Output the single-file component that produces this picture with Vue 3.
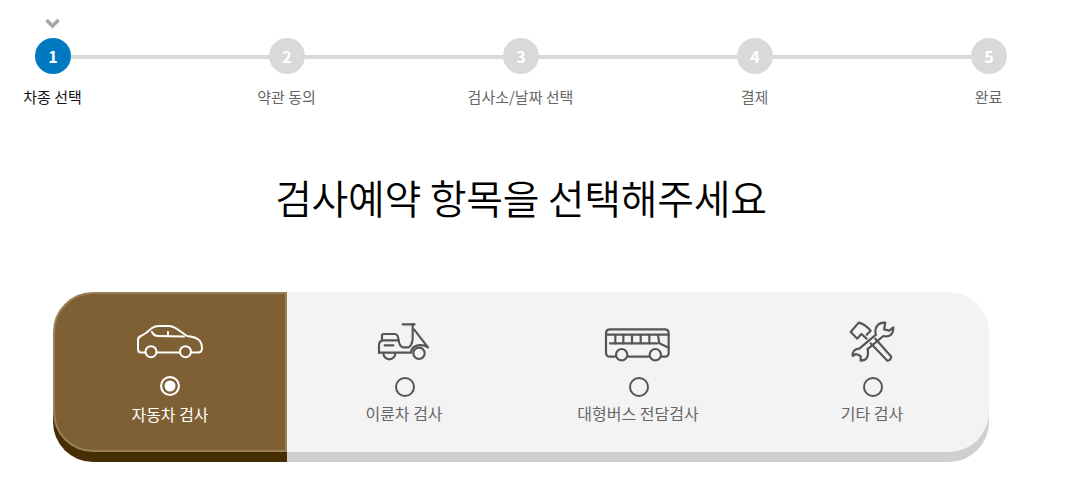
<script setup>
const steps = [
  { n: 1, label: '차종 선택', active: true },
  { n: 2, label: '약관 동의' },
  { n: 3, label: '검사소/날짜 선택' },
  { n: 4, label: '결제' },
  { n: 5, label: '완료' },
]
</script>

<template>
  <div class="page">
    <div class="stepper">
      <template v-for="(s, i) in steps" :key="s.n">
        <div class="line" v-if="i > 0"></div>
        <div class="step" :class="{ active: s.active }">
          <svg v-if="s.active" class="chev" viewBox="0 0 16 12" width="16" height="12">
            <path d="M2.500 3 L8.500 9 L14.500 3" fill="none" stroke="#a6a6a6" stroke-width="3.600" />
          </svg>
          <div class="dot">{{ s.n }}</div>
          <div class="step-label">{{ s.label }}</div>
        </div>
      </template>
    </div>

    <h1 class="title">검사예약 항목을 선택해주세요</h1>

    <div class="card">
      <div class="tab selected">
        <svg class="icon" viewBox="0 -2 66 46" width="66" height="46">
          <g fill="none" stroke="#fff" stroke-width="2" stroke-linecap="round" stroke-linejoin="round">
            <path d="M8.500 28.500 H4 Q1 28.500 1 25 V16 Q1 13 4 12 L9 9 L15 4 Q18 2 22 2 H32 Q36 2 40 5 L50 12 Q60 13 63 17 Q65 20 65 24 Q65 28.500 61 28.500 H54" />
            <path d="M20 28.500 H43" />
            <circle cx="14" cy="27.700" r="5.500" />
            <circle cx="48.500" cy="27.700" r="5.500" />
            <path d="M15 8 Q17 12 21 12 L47 12.500" />
            <path d="M31 8 V12" />
          </g>
        </svg>
        <span class="radio on"></span>
        <span class="label">자동차 검사</span>
      </div>
      <div class="rest">
        <div class="tab">
          <svg class="icon" viewBox="72 36 180 138" width="60" height="46">
            <g fill="none" stroke="#555" stroke-width="6.500" stroke-linecap="round" stroke-linejoin="round">
              <path d="M87 128 V104 Q88 92 100 91 H146 Q148 108 158 112 H176 Q190 104 188 72 L188 42" />
              <path d="M87 128 H183 Q184 110 204 106 Q222 104 234 112 L192 58" />
              <path d="M96 91 V76 Q96 72 102 72 H134 Q144 72 146 91" />
              <path d="M104 106 H130" />
              <path d="M158 43 H194" />
              <path d="M100 130 A18 18 0 0 0 136 130" />
              <circle cx="207" cy="130" r="17" />
            </g>
          </svg>
          <span class="radio"></span>
          <span class="label">이륜차 검사</span>
        </div>
        <div class="tab">
          <svg class="icon" viewBox="99 36 210 138" width="70" height="46">
            <g fill="none" stroke="#555" stroke-width="6.500" stroke-linecap="round" stroke-linejoin="round">
              <path d="M136 140 H120 Q108 140 108 128 V70 Q108 58 120 58 H284 Q296 58 296 70 V128 Q296 140 284 140 H274 M174 140 H236" />
              <path d="M108 74 H296" />
              <path d="M120 100 H262" />
              <path d="M136 76 V100 M160 76 V100 M186 76 V100 M212 76 V100 M238 76 V100" />
              <path d="M264 76 L268 100 L296 113" />
              <circle cx="155" cy="134" r="17" />
              <circle cx="256" cy="134" r="17" />
            </g>
          </svg>
          <span class="radio"></span>
          <span class="label">대형버스 전담검사</span>
        </div>
        <div class="tab">
          <svg class="icon" viewBox="66 96 180 138" width="60" height="46">
            <g fill="none" stroke="#555" stroke-width="6.500" stroke-linecap="round" stroke-linejoin="round">
              <path d="M116 98 L92 126 L112 146 L124 132 L140 146 M116 98 Q134 102 152 122 L140 134" />
              <path d="M152 160 L202 212 Q212 212 214 200 L166 146" />
              <path d="M196 98 Q170 96 166 122 Q166 130 168 134 L118 176 Q96 178 98 198 L108 192 L122 198 L122 212 Q146 212 144 186 Q144 180 142 178 L190 138 Q220 144 220 112 L208 122 L192 118 Z" />
            </g>
          </svg>
          <span class="radio"></span>
          <span class="label">기타 검사</span>
        </div>
      </div>
    </div>
  </div>
</template>

<style>
html, body { margin: 0; background: #fff; }
</style>

<style scoped>
.page {
  width: 1078px;
  height: 483px;
  overflow: hidden;
  font-family: "Noto Sans CJK KR", "Noto Sans", sans-serif;
}
.stepper {
  display: flex;
  align-items: flex-start;
  width: 972px;
  margin-left: 35px;
  padding-top: 38px;
}
.line {
  flex: 1;
  height: 4px;
  margin-top: 17px;
  background: #d9d9d9;
}
.step {
  position: relative;
  width: 36px;
  display: flex;
  flex-direction: column;
  align-items: center;
}
.chev {
  position: absolute;
  top: -21px;
  left: 9px;
}
.dot {
  width: 36px;
  height: 36px;
  flex: none;
  border-radius: 50%;
  background: #d9d9d9;
  color: #fff;
  font-size: 16px;
  font-weight: 700;
  line-height: 36px;
  text-align: center;
}
.step.active .dot { background: #0079c1; }
.step-label {
  margin-top: 13px;
  margin-right: 1px;
  font-size: 15px;
  line-height: 20px;
  color: #666;
  white-space: nowrap;
}
.step.active .step-label { color: #111; }
.title {
  width: 936px;
  margin: 65px 0 70px 53px;
  font-size: 40px;
  font-weight: 350;
  letter-spacing: -0.3px;
  line-height: 50px;
  color: #000;
  text-align: center;
}
.card {
  display: flex;
  width: 936px;
  height: 160px;
  margin-left: 53px;
}
.rest {
  display: flex;
  flex: 1;
  background: #f3f3f3;
  border-radius: 0 40px 40px 0;
  box-shadow: 0 10px 0 #cfcfcf;
}
.tab {
  flex: 0 0 234px;
  box-sizing: border-box;
  height: 160px;
  padding-top: 30px;
  display: flex;
  flex-direction: column;
  align-items: center;
}
.tab.selected {
  padding-top: 28px;
  background: #7f5f34;
  border: 2px solid #9a8059;
  border-radius: 40px 0 0 40px;
  box-shadow: 0 10px 0 #452e04;
}
.icon {
  display: block;
  flex: none;
  margin-bottom: 9px;
  overflow: visible;
}
.radio {
  box-sizing: border-box;
  display: block;
  flex: none;
  width: 20px;
  height: 20px;
  margin-left: 2px;
  border: 2px solid #555;
  border-radius: 50%;
  background: #f3f3f3;
}
.radio.on {
  margin-top: -1px;
  margin-left: 0;
  border-color: #fff;
  background: #fff;
  box-shadow: inset 0 0 0 2.500px #7f5f34;
}
.label {
  margin-top: 5px;
  font-size: 16px;
  line-height: 22px;
  color: #666;
  white-space: nowrap;
}
.selected .label { margin-top: 7px; color: #fff; }
</style>
